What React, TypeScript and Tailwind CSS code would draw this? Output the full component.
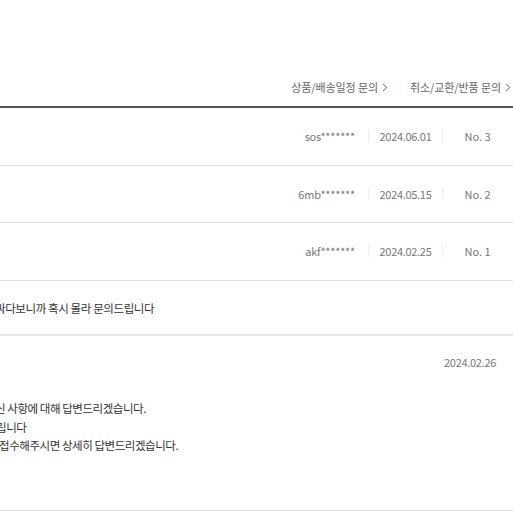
import React from 'react';

const font = { fontFamily: '"Noto Sans CJK KR", "Noto Sans", sans-serif' };

const rows = [
  { author: 'sos*******', date: '2024.06.01', no: 'No. 3' },
  { author: '6mb*******', date: '2024.05.15', no: 'No. 2' },
  { author: 'akf*******', date: '2024.02.25', no: 'No. 1' },
];

const Chevron = () => (
  <svg width="6" height="9" viewBox="0 0 6 9" fill="none" className="ml-[4px]">
    <path d="M1 0.8L4.8 4.5L1 8.2" stroke="#666" strokeWidth="1" />
  </svg>
);

export default function App() {
  return (
    <div className="w-[513px] h-[513px] overflow-hidden bg-white text-[#333]" style={font}>
      {/* tabs */}
      <div className="flex justify-end items-center gap-[22px] pt-[79px] pb-[11px] pr-[2px] border-b-2 border-[#555] text-[11px] tracking-[-0.1px] text-[#666]">
        <div className="flex items-center h-[16px]">
          상품/배송일정 문의
          <Chevron />
        </div>
        <div className="flex items-center h-[16px]">
          취소/교환/반품 문의
          <Chevron />
        </div>
      </div>

      {rows.map((r) => (
        <div key={r.no} className="flex items-center justify-end h-[57.5px] border-b border-[#e2e2e2] text-[11px] text-[#777]">
          <div className="pr-[13px] text-right tracking-[-0.2px]">{r.author}</div>
          <div className="w-px h-[12px] bg-[#eee]" />
          <div className="w-[73px] text-center tracking-[-0.3px]">{r.date}</div>
          <div className="w-px h-[12px] bg-[#eee]" />
          <div className="w-[70px] text-center pr-[1px]">{r.no}</div>
        </div>
      ))}

      {/* question */}
      <div className="h-[55px] flex items-center pt-[3px] border-b-2 border-[#e8e8e8] overflow-hidden">
        <div className="whitespace-nowrap -ml-[5px] text-[11.5px] tracking-[-0.4px] text-[#333]">
          싸다보니까 혹시 몰라 문의드립니다
        </div>
      </div>

      {/* answer */}
      <div className="h-[175px] border-b border-[#e2e2e2] overflow-hidden">
        <div className="flex justify-end pt-[18px] pr-[17px] text-[11px] tracking-[-0.3px] text-[#777]">
          2024.02.26
        </div>
        <div className="pt-[29px] text-[11.5px] leading-[18.5px] tracking-[-0.45px] text-[#333] whitespace-nowrap">
          <div className="-ml-[5px]">신 사항에 대해 답변드리겠습니다.</div>
          <div className="-ml-[4px]">립니다</div>
          <div className="-ml-[1px]">접수해주시면 상세히 답변드리겠습니다.</div>
        </div>
      </div>
    </div>
  );
}
